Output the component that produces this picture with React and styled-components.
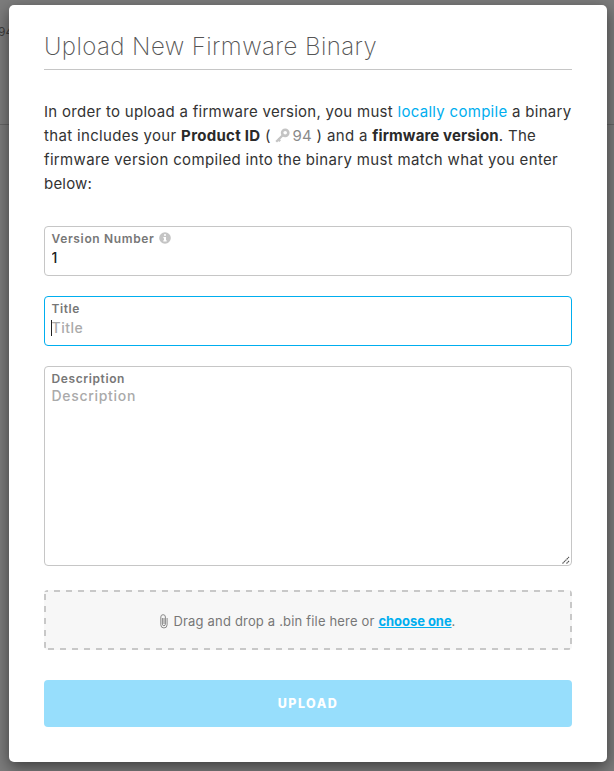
import React from "react";
import styled, { createGlobalStyle } from "styled-components";

const GlobalStyle = createGlobalStyle`
  *, *::before, *::after { box-sizing: border-box; }
  body { margin: 0; overflow: hidden; background: #7c7c7c; font-family: Inter, "Liberation Sans", sans-serif; }
`;

const Page = styled.div`
  position: relative;
  height: 771px;
  padding: 5px 7px 9px 9px;
  overflow: hidden;
  background: #7c7c7c;
`;

const PageHeader = styled.div`
  position: absolute;
  inset: 0 0 auto 0;
  height: 125px;
  padding-top: 22px;
  border-bottom: 1px solid #656565;
  font-size: 12px;
  line-height: 20px;
  color: #3c3c3c;
  text-indent: -2px;
`;

const Modal = styled.section`
  position: relative;
  display: flex;
  flex-direction: column;
  height: 757px;
  padding: 27px 35px 35px;
  border-radius: 5px;
  background: #fff;
  box-shadow: 0 5px 15px rgba(0, 0, 0, 0.5);
`;

const Heading = styled.h1`
  height: 38px;
  margin: 0 0 30px;
  border-bottom: 1px solid #c6c6c6;
  font-size: 24px;
  font-weight: 200;
  line-height: 30px;
  letter-spacing: 0.42px;
  white-space: nowrap;
  color: #555;
`;

const Intro = styled.div`
  height: 96px;
  margin-bottom: 30px;
  font-size: 15px;
  line-height: 24px;
  color: #333;
`;

const Line = styled.div`
  height: 24px;
  white-space: nowrap;
  letter-spacing: ${(p) => p.$track}px;
`;

const Strong = styled.strong`
  font-weight: 700;
  color: #2a2a2a;
  letter-spacing: ${(p) => p.$track}px;
`;

const Link = styled.a`
  color: #00aeef;
  cursor: pointer;
`;

const ProductId = styled.span`
  color: #8a8a8a;
  svg { margin: 0 2px 0 0; vertical-align: -2px; }
`;

const Field = styled.label`
  position: relative;
  display: flex;
  flex-direction: column;
  flex: none;
  height: ${(p) => p.$height}px;
  margin-bottom: ${(p) => p.$gap}px;
  padding: 3px 7px 4px 6.5px;
  border: 1px solid ${(p) => (p.$active ? "#00aeef" : "#c6c6c6")};
  border-radius: 4px;
`;

const FieldLabel = styled.span`
  display: flex;
  align-items: center;
  gap: 4px;
  height: 16px;
  font-size: 12px;
  font-weight: 600;
  letter-spacing: ${(p) => p.$track}px;
  color: #777;
`;

const Input = styled.input`
  width: 100%;
  height: 24px;
  padding: 0;
  border: 0;
  outline: 0;
  background: none;
  font: 500 14px/24px Inter, "Liberation Sans", sans-serif;
  letter-spacing: 0.5px;
  color: #222;
  &::placeholder { color: #aaa; opacity: 1; }
`;

const TextArea = styled.textarea`
  width: 100%;
  flex: 1;
  padding: 0;
  border: 0;
  outline: 0;
  resize: none;
  background: none;
  font: 500 14px/19px Inter, "Liberation Sans", sans-serif;
  letter-spacing: 0.7px;
  color: #222;
  &::placeholder { color: #aaa; opacity: 1; }
`;

const Caret = styled.i`
  position: absolute;
  left: 6px;
  top: 23px;
  width: 1px;
  height: 16px;
  background: #222;
`;

const Grip = styled.svg`
  position: absolute;
  right: 0;
  bottom: 0;
`;

const DropZone = styled.div`
  display: flex;
  align-items: center;
  justify-content: center;
  gap: 5px;
  flex: none;
  height: 60px;
  margin-bottom: 30px;
  padding: 2px 2px 0;
  border-radius: 4px;
  background:
    repeat-x 10px 0 / 12px 2px linear-gradient(90deg, #c8c8c8 6px, transparent 6px),
    repeat-x 4px 100% / 12px 2px linear-gradient(90deg, #c8c8c8 6px, transparent 6px),
    repeat-y 0 4px / 2px 12px linear-gradient(#c8c8c8 6px, transparent 6px),
    repeat-y 100% 0 / 2px 12px linear-gradient(#c8c8c8 6px, transparent 6px),
    #f7f7f7;
  font-size: 13px;
  line-height: 18px;
  letter-spacing: 0.18px;
  color: #777;
`;

const ChooseLink = styled.a`
  font-weight: 700;
  letter-spacing: -0.05px;
  color: #00aeef;
  text-decoration: underline;
  cursor: pointer;
`;

const UploadButton = styled.button`
  flex: none;
  height: 47px;
  padding: 0;
  border: 0;
  border-radius: 4px;
  background: #97defc;
  font: 800 12.5px/20px Inter, "Liberation Sans", sans-serif;
  letter-spacing: 1.5px;
  color: #fff;
`;

const KeyIcon = () => (
  <svg width="15" height="15" viewBox="0 0 15 15">
    <path d="M8.5 6.5 L1.2 13.8 M2.6 10.8 L5.2 13.2" stroke="#c4c4c4" strokeWidth="2.3" fill="none" />
    <circle cx="10.2" cy="4.8" r="3.1" fill="none" stroke="#c4c4c4" strokeWidth="2.6" />
  </svg>
);

const InfoIcon = () => (
  <svg width="12" height="12" viewBox="0 0 12 12">
    <circle cx="6" cy="6" r="5.8" fill="#c4c4c4" />
    <path d="M5 2.2h2v1.6H5zM4.4 5H7v3.3h.7v1.2H4.3V8.3H5V6.2h-.6z" fill="#fff" />
  </svg>
);

const ClipIcon = () => (
  <svg width="8" height="15" viewBox="0 0 8 15" fill="none" stroke="#888" strokeWidth="1">
    <path d="M2.4 4v6.2a1.5 1.5 0 0 0 3 0V3a2.2 2.2 0 0 0-4.6 0v7.8a3.1 3.1 0 0 0 6.3 0V4" />
    <path d="M4 4v6" />
  </svg>
);

export default function App() {
  return (
    <Page>
      <GlobalStyle />
      <PageHeader>94</PageHeader>
      <Modal>
        <Heading>Upload New Firmware Binary</Heading>
        <Intro>
          <Line $track={0.29}>
            In order to upload a firmware version, you must <Link>locally compile</Link> a binary
          </Line>
          <Line $track={0.33}>
            that includes your <Strong $track={0.3}>Product ID</Strong> ( <ProductId><KeyIcon />94</ProductId> ) and a{" "}
            <Strong $track={0.12}>firmware version</Strong>. The
          </Line>
          <Line $track={0.34}>firmware version compiled into the binary must match what you enter</Line>
          <Line $track={0.2}>below:</Line>
        </Intro>
        <Field $height={50} $gap={20}>
          <FieldLabel $track={0.65}>Version Number <InfoIcon /></FieldLabel>
          <Input defaultValue="1" />
        </Field>
        <Field $height={50} $gap={20} $active>
          <FieldLabel $track={0.55}>Title</FieldLabel>
          <Input placeholder="Title" />
          <Caret />
        </Field>
        <Field $height={200} $gap={24}>
          <FieldLabel $track={0.6}>Description</FieldLabel>
          <TextArea placeholder="Description" />
          <Grip width="10" height="10" viewBox="0 0 10 10" stroke="#555" strokeWidth="1.1" strokeDasharray="1.6 .4">
            <path d="M1.5 8.5 L8 2 M5.5 8.5 L8 6" />
          </Grip>
        </Field>
        <DropZone>
          <ClipIcon />
          <span>Drag and drop a .bin file here or <ChooseLink>choose one</ChooseLink>.</span>
        </DropZone>
        <UploadButton>UPLOAD</UploadButton>
      </Modal>
    </Page>
  );
}
